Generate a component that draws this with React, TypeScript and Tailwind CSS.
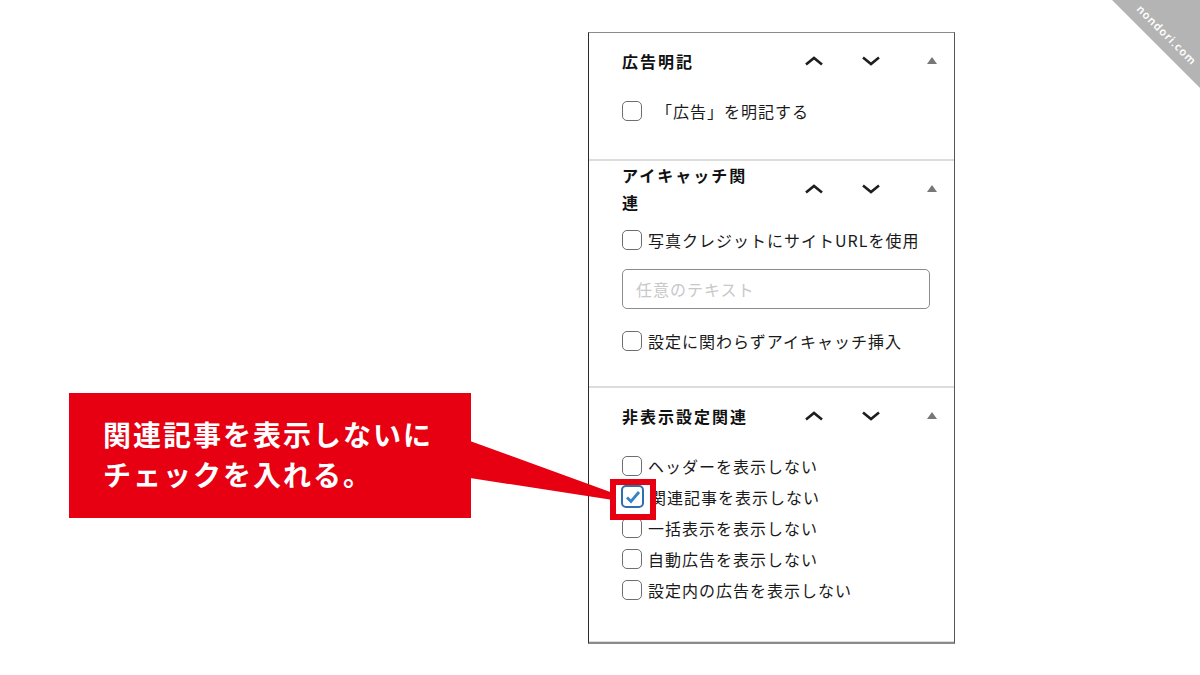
const jp = "font-['Noto_Sans_CJK_JP','Noto_Sans',sans-serif]";

function UpIcon() {
  return (
    <svg width="20" height="10" viewBox="0 0 20 10">
      <polyline points="2,8.5 10,2 18,8.5" fill="none" stroke="#1e1e1e" strokeWidth="2.6" strokeLinejoin="miter" />
    </svg>
  );
}

function DownIcon() {
  return (
    <svg width="20" height="10" viewBox="0 0 20 10">
      <polyline points="2,1.5 10,8 18,1.5" fill="none" stroke="#1e1e1e" strokeWidth="2.6" strokeLinejoin="miter" />
    </svg>
  );
}

function Caret() {
  return (
    <svg width="10" height="7" viewBox="0 0 10 7">
      <polygon points="5,0 10,7 0,7" fill="#777" />
    </svg>
  );
}

function Header({ title }: { title: string }) {
  return (
    <div className="flex h-[56px] items-center">
      <div className="w-[140px] text-[16px] font-bold leading-[27px] tracking-[2px] text-[#111]">{title}</div>
      <div className="ml-[38px] flex w-[28px] justify-center">
        <UpIcon />
      </div>
      <div className="ml-[29px] flex w-[28px] justify-center">
        <DownIcon />
      </div>
      <div className="ml-[42px] flex w-[10px] justify-center pb-[2px]">
        <Caret />
      </div>
    </div>
  );
}

function Box({ checked = false }: { checked?: boolean }) {
  if (checked) {
    return (
      <div className="-ml-[1px] flex h-[23px] w-[23px] shrink-0 items-center justify-center rounded-[5px] border-2 border-[#2f6fb0] bg-white">
        <svg width="16" height="14" viewBox="0 0 16 14">
          <polyline points="2,7.5 6,11.5 14,2" fill="none" stroke="#3582c4" strokeWidth="2.8" />
        </svg>
      </div>
    );
  }
  return <div className="h-[20px] w-[20px] shrink-0 rounded-[5px] border-[1.5px] border-[#6e6e6e] bg-white" />;
}

function Check({ label, checked = false, gap = "gap-[6px]" }: { label: string; checked?: boolean; gap?: string }) {
  return (
    <div className={`flex h-[31px] items-center ${gap}`}>
      <Box checked={checked} />
      <span className="text-[16px] leading-none tracking-[1px] text-[#1a1a1a]">{label}</span>
    </div>
  );
}

export default function App() {
  return (
    <div className={`relative h-[675px] w-[1200px] overflow-hidden bg-white ${jp}`}>
      {/* settings panel */}
      <div className="ml-[588px] mt-[32px] w-[367px] border-t border-l border-r border-t-[#8a8a8a] border-l-[#2a2a2a] border-r-[#555] border-b-2 border-b-[#8a8a8a]">
        <section className="border-b-2 border-[#dcdcdc] pl-[33px] pb-[33px]">
          <Header title="広告明記" />
          <div className="pt-[6px]">
            <Check label="「広告」を明記する" gap="gap-[14px]" />
          </div>
        </section>

        <section className="border-b-2 border-[#dcdcdc] pl-[33px] pb-[30px]">
          <Header title="アイキャッチ関連" />
          <div className="pt-[7px]">
            <Check label="写真クレジットにサイトURLを使用" />
          </div>
          <div className="mt-[14px] flex h-[40px] w-[308px] items-center rounded-[5px] border border-[#8c8c8c] px-[13px]">
            <span className="text-[16px] tracking-[1px] text-[#c8c8c8]">任意のテキスト</span>
          </div>
          <div className="mt-[16px]">
            <Check label="設定に関わらずアイキャッチ挿入" />
          </div>
        </section>

        <section className="border-b border-[#dcdcdc] pl-[33px] pb-[36px]">
          <Header title="非表示設定関連" />
          <div className="flex flex-col pt-[6px]">
            <Check label="ヘッダーを表示しない" />
            <Check label="関連記事を表示しない" checked />
            <Check label="一括表示を表示しない" />
            <Check label="自動広告を表示しない" />
            <Check label="設定内の広告を表示しない" />
          </div>
        </section>
      </div>

      {/* annotation callout */}
      <div className="absolute left-[69px] top-[393px] flex h-[125px] w-[402px] flex-col justify-center bg-[#e60012] pl-[34px] pb-[4px]">
        <p className="text-[28px] font-bold leading-[40px] tracking-[2px] text-white">関連記事を表示しないに</p>
        <p className="text-[28px] font-bold leading-[40px] tracking-[2px] text-white">チェックを入れる。</p>
      </div>
      <svg className="absolute left-0 top-0" width="1200" height="675" viewBox="0 0 1200 675">
        <polygon points="470,441 613,493 613,500 470,478" fill="#e60012" />
      </svg>
      <div className="absolute left-[610px] top-[479px] h-[41px] w-[46px] border-[6px] border-[#e60012]" />

      {/* watermark */}
      <svg className="absolute right-0 top-0" width="88" height="88" viewBox="0 0 88 88">
        <polygon points="0,0 88,0 88,88" fill="#b4b4b4" />
      </svg>
      <div className="absolute left-[1128px] top-[28px] w-[76px] rotate-45 text-center font-['Noto_Sans',sans-serif] text-[11px] font-semibold leading-none tracking-[1px] text-white">
        nondori.com
      </div>
    </div>
  );
}
